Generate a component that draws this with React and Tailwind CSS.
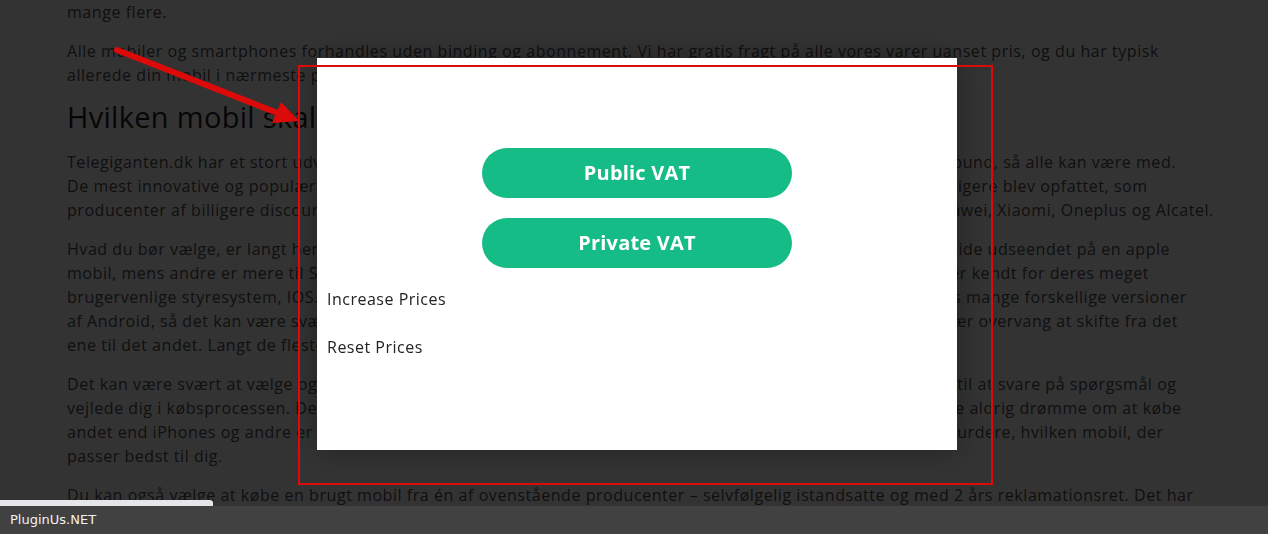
import React from "react";

const paragraphs = [
  ["mange flere."],
  [
    "Alle mobiler og smartphones forhandles uden binding og abonnement. Vi har gratis fragt på alle vores varer uanset pris, og du har typisk",
    "allerede din mobil i nærmeste pakkeshop dagen efter, du har bestilt den.",
  ],
  "heading",
  [
    "Telegiganten.dk har et stort udvalg af mobiltelefoner fra alle de største producenter, og priserne er helt nede i bund, så alle kan være med.",
    "De mest innovative og populære mobiler kommer fra Apple og Samsung, mens flere andre producenter, der tidligere blev opfattet, som",
    "producenter af billigere discountmobiler, nu også er blandt de mest populære, som f.eks. Sony, Nokia, HTC, Huawei, Xiaomi, Oneplus og Alcatel.",
  ],
  [
    "Hvad du bør vælge, er langt hen ad vejen en smagssag og et spørgsmål om vane. Mange kunder kan rigtig godt lide udseendet på en apple",
    "mobil, mens andre er mere til Samsung eller en af de mange andre producenter. Telefonerne fra Apple er jo især kendt for deres meget",
    "brugervenlige styresystem, IOS. Samsung og de fleste andre bruger i stedet systemet Android, og af dette findes mange forskellige versioner",
    "af Android, så det kan være svært at vælge. Er du først vant til det ene styresystem, så kan det være en rigtig svær overvang at skifte fra det",
    "ene til det andet. Langt de fleste vælger derfor at blive ved det, de kender.",
  ],
  [
    "Det kan være svært at vælge og finde den rigtige mobil, men heldigvis har vi en kundeservice, der altid står klar til at svare på spørgsmål og",
    "vejlede dig i købsprocessen. Der er mange forskellige typer af kunder. Nogle er trofaste over for Apple, og kunne aldrig drømme om at købe",
    "andet end iPhones og andre er mere åbne over for alternativer fra andre mærker. Vi hjælper dig gerne med at vurdere, hvilken mobil, der",
    "passer bedst til dig.",
  ],
  [
    "Du kan også vælge at købe en brugt mobil fra én af ovenstående producenter – selvfølgelig istandsatte og med 2 års reklamationsret. Det har",
    "du stadig mulighed for at returnere varen inden for 14 dage.",
  ],
];

export default function App() {
  return (
    <div className="relative h-[534px] overflow-hidden bg-white font-['Open_Sans',sans-serif]">
      {/* PAGE CONTENT */}
      <div className="px-[67px] text-[16px] leading-[24px] text-[#4f4f4f] tracking-[0.55px]">
        {paragraphs.map((p, i) =>
          p === "heading" ? (
            <h2
              key={i}
              className="mb-[18px] text-[29px] leading-[30px] tracking-[0.3px] text-[#1f1f1f]"
            >
              Hvilken mobil skal jeg vælge?
            </h2>
          ) : (
            <p key={i} className="mb-[15px] whitespace-nowrap">
              {p.map((line, j) => (
                <React.Fragment key={j}>
                  {line}
                  {j < p.length - 1 && <br />}
                </React.Fragment>
              ))}
            </p>
          )
        )}
      </div>

      {/* OVERLAY */}
      <div className="fixed inset-0 bg-black/80" />

      {/* MODAL */}
      <div className="fixed left-[317px] top-[58px] flex h-[392px] w-[640px] flex-col bg-white pt-[90px] shadow-[0_0_30px_rgba(0,0,0,0.35)]">
        <div className="flex flex-col items-center gap-5">
          <button className="h-[50px] w-[310px] rounded-full bg-[#16bc86] text-[20px] font-bold tracking-[0.2px] text-white">
            Public VAT
          </button>
          <button className="h-[50px] w-[310px] rounded-full bg-[#16bc86] text-[20px] font-bold tracking-[0.2px] text-white">
            Private VAT
          </button>
        </div>
        <div className="mt-[19px] flex flex-col gap-6 px-[10px] text-[16px] leading-[24px] tracking-[0.5px] text-[#222]">
          <span>Increase Prices</span>
          <span>Reset Prices</span>
        </div>
      </div>

      {/* ANNOTATION */}
      <div className="pointer-events-none fixed left-[298px] top-[65px] h-[420px] w-[695px] border-2 border-[#dd0a0a]" />
      <svg
        className="pointer-events-none fixed left-0 top-0"
        width="1268"
        height="534"
        viewBox="0 0 1268 534"
      >
        <line
          x1="117"
          y1="50"
          x2="280"
          y2="114"
          stroke="#dd0a0a"
          strokeWidth="6"
          strokeLinecap="round"
        />
        <polygon points="299,121 272,123 281,102" fill="#dd0a0a" />
      </svg>

      {/* BOTTOM BAR */}
      <div className="fixed bottom-0 left-0 right-0 flex flex-col">
        <div className="h-[6px] w-[213px] rounded-tr-[3px] bg-[#e4e6ea]" />
        <div className="flex h-[28px] items-center bg-[#414141] px-[10px] font-['DejaVu_Sans',sans-serif] text-[13px] text-[#f2f2f2]">
          PluginUs.NET
        </div>
      </div>
    </div>
  );
}
